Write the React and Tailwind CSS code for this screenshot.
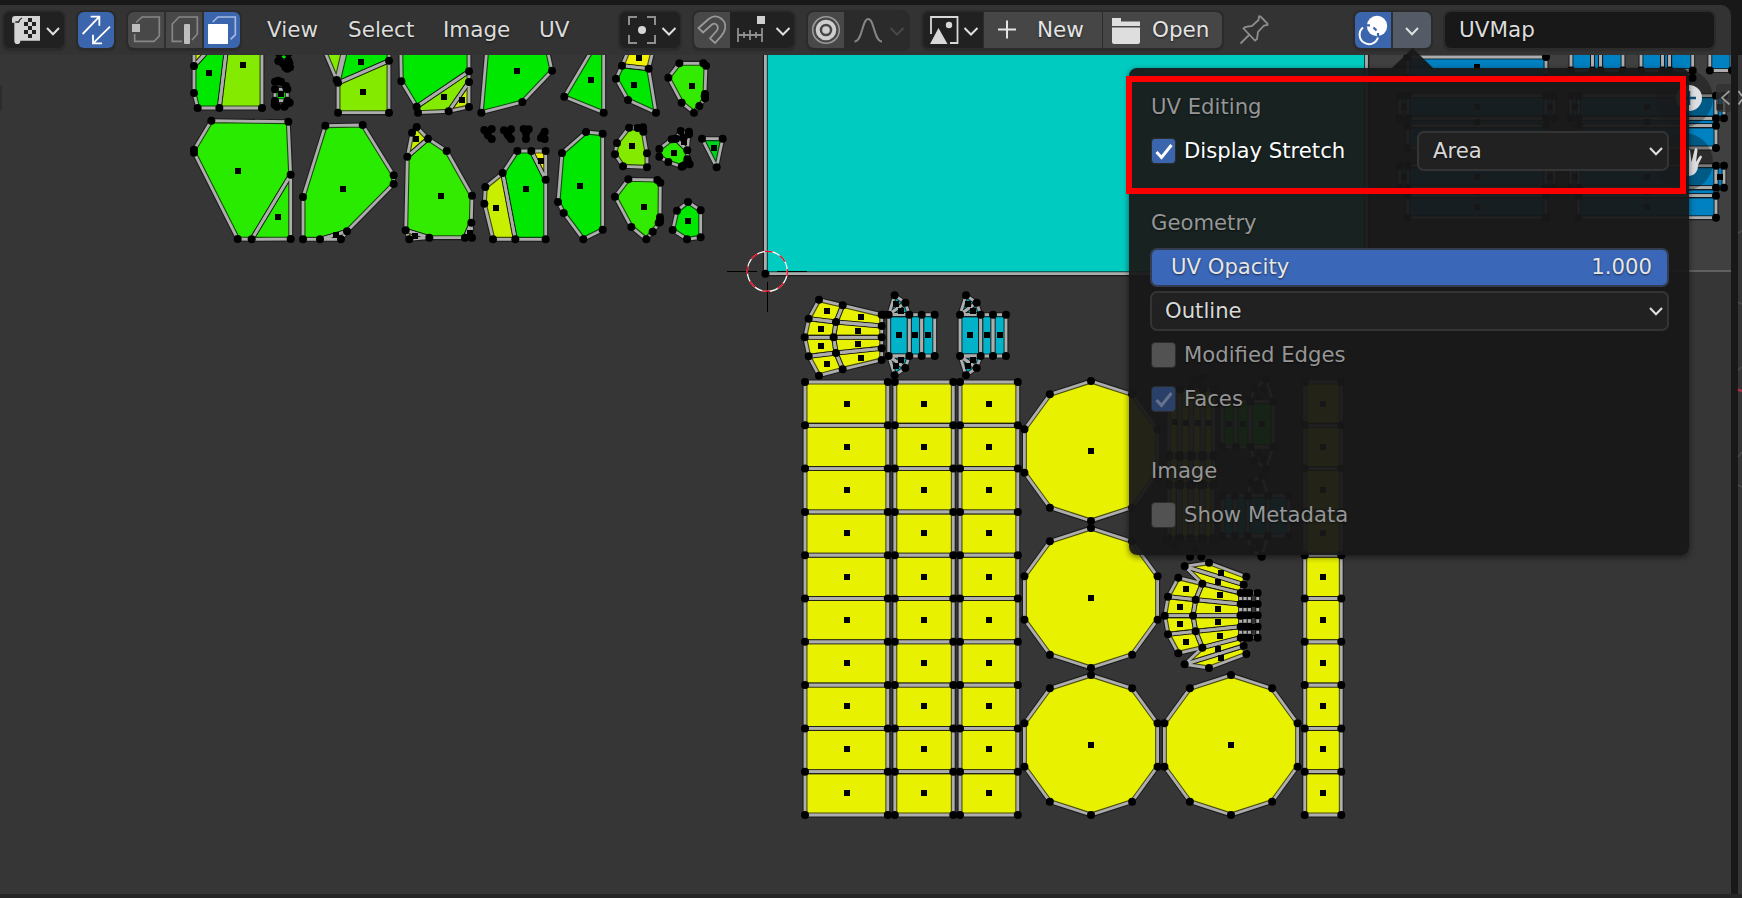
import React from "react";

const GREEN = "#00e800";
const LEAF = "#28eb00";
const LIME = "#84eb00";
const CHART = "#c9ef00";
const YELLOW = "#e8f200";
const TEAL = "#00b3c8";
const BLUE = "#0081c1";
const NONE = "none";

// An island group: faces [color, points], extra vertices and face dots, in local units.
const group = (ox, oy, sx, sy, faces, dots = [], verts = []) => {
  const t = ([x, y]) => [ox + x / sx, oy + y / sy];
  return {
    faces: faces.map(([c, pts]) => [c, pts.map(t)]),
    dots: dots.map(t),
    verts: verts.map(t),
  };
};

const rect = (c, x1, y1, x2, y2) => [c, [[x1, y1], [x2, y1], [x2, y2], [x1, y2]]];

const leftIslands = group(180, 50, 3, 3, [
  [CHART, [[42, 48], [42, 0], [85, 0]]],
  [GREEN, [[42, 48], [42, 129], [53, 174], [118, 174], [140, -10], [95, -10]]],
  [LIME, [[118, 174], [246, 174], [246, -10], [140, -10]]],
  [LIME, [[432, 0], [470, 90], [491, 0]]],
  [GREEN, [[474, 98], [497, 0], [627, -10], [627, 32]]],
  [LIME, [[474, 100], [627, 32], [627, 188], [474, 188]]],
  [GREEN, [[662, -10], [664, 94], [710, 170], [867, 64], [867, -10]]],
  [LIME, [[714, 188], [710, 170], [867, 64], [867, 96], [806, 184]]],
  [CHART, [[806, 184], [867, 96], [867, 171]]],
  [LEAF, [[94, 212], [325, 215], [332, 374], [215, 568], [173, 567], [42, 308], [42, 299]]],
  [LEAF, [[332, 374], [332, 567], [215, 568]]],
  [LEAF, [[436, 227], [548, 225], [641, 376], [641, 402], [501, 544], [420, 568], [369, 568], [369, 441]]],
  [NONE, [[420, 568], [501, 544], [483, 568]]],
  [CHART, [[710, 231], [744, 266], [682, 320], [696, 248]]],
  ["#32eb00", [[682, 320], [744, 266], [800, 303], [876, 437], [874, 518], [855, 563], [748, 563], [677, 541]]],
  [CHART, [[677, 541], [748, 563], [688, 568]]],
  [GREEN, [[874, 518], [876, 563], [855, 563]]],
  [GREEN, [[285, 118], [322, 118], [322, 152], [285, 152]]],
  [GREEN, [[297, 10], [325, 10], [325, 32], [300, 32]]],
], [
  [87, 69], [189, 45], [543, 36], [549, 126], [792, 141], [846, 150], [174, 363], [294, 501],
  [489, 417], [708, 267], [783, 438], [467, 555], [704, 557], [869, 549], [303, 133],
], [
  [285, 95], [294, 92], [303, 95], [319, 113], [318, 108], [285, 158], [329, 158], [291, 170], [313, 170], [284, 164], [319, 163],
  [295, 33], [308, 40], [328, 40], [330, 52], [316, 52], [322, 56],
]);

const midIslands = group(470, 50, 3, 3, [
  [GREEN, [[51, -10], [34, 188], [157, 156], [246, 62], [230, -10]]],
  [GREEN, [[375, -15], [283, 140], [401, 188], [401, -15]]],
  ["#f0f000", [[456, 47], [536, 56], [552, -10], [480, -10]]],
  [GREEN, [[456, 47], [536, 56], [558, 188], [474, 150], [438, 86]]],
  ["#32eb00", [[628, 40], [700, 40], [708, 47], [705, 132], [705, 145], [688, 168], [672, 188], [635, 158], [595, 83]]],
  [CHART, [[98, 369], [46, 411], [43, 461], [69, 568], [136, 568]]],
  [GREEN, [[98, 369], [142, 303], [184, 303], [227, 389], [227, 568], [136, 568]]],
  ["#f0f000", [[184, 303], [227, 303], [227, 389]]],
  [GREEN, [[348, 246], [398, 251], [398, 539], [340, 568], [281, 489], [264, 456], [276, 309]]],
  [LIME, [[477, 233], [503, 234], [519, 232], [520, 245], [531, 310], [531, 352], [459, 349], [435, 313], [441, 279]]],
  [NONE, [[616, 266], [632, 243], [657, 250], [652, 301]]],
  [LEAF, [[568, 297], [605, 268], [618, 266], [652, 301], [652, 328], [635, 350], [595, 336], [568, 320]]],
  ["#00d21c", [[696, 266], [758, 266], [740, 352]]],
  ["#32eb00", [[475, 388], [562, 390], [571, 398], [570, 502], [570, 516], [548, 545], [529, 568], [484, 531], [435, 440]]],
  [GREEN, [[654, 456], [692, 481], [692, 562], [651, 568], [608, 540], [621, 482]]],
], [
  [141, 63], [363, 90], [507, 24], [492, 105], [666, 108], [78, 474], [168, 417], [212, 332],
  [330, 408], [486, 288], [612, 309], [642, 276], [732, 294], [522, 471], [654, 513],
], [
  [43, 240], [65, 237], [54, 256], [65, 267], [50, 246], [102, 241], [123, 238], [112, 252], [123, 267], [116, 258],
  [161, 237], [176, 238], [168, 250], [168, 267], [224, 245], [213, 264], [224, 267], [219, 256],
  [632, 243], [657, 245], [657, 253], [641, 263], [659, 343], [640, 347], [653, 336], [570, 509], [566, 518], [704, 139],
]);

const tri = (x, top) => {
  const y = (v) => (top ? v : 332 - v);
  return [
    [TEAL, [[x, y(104)], [x + 18, y(46)], [x + 50, y(68)]]],
    [TEAL, [[x, y(104)], [x + 50, y(68)], [x + 62, y(104)]]],
  ];
};
const strip = (x) => [
  ...tri(x, true),
  ...tri(x, false),
  rect(TEAL, x, 104, x + 62, 228),
  rect(TEAL, x + 62, 104, x + 99, 228),
  rect(TEAL, x + 99, 104, x + 138, 228),
];

const quads = (color, rows) => {
  const out = [];
  for (let r = 0; r + 1 < rows.length; r++)
    for (let i = 0; i + 1 < rows[r].length; i++)
      out.push([color, [rows[r][i], rows[r][i + 1], rows[r + 1][i + 1], rows[r + 1][i]]]);
  return out;
};

const upperFan = group(790, 280, 3, 3, [
  ...quads(YELLOW, [
    [[87, 59], [56, 116], [44, 172], [56, 229], [87, 287]],
    [[158, 76], [138, 126], [131, 172], [138, 219], [158, 268]],
    [[275, 104], [275, 138], [275, 172], [275, 205], [275, 240]],
  ]),
  ...strip(296),
  ...strip(510),
], [
  [111, 93], [93, 147], [93, 198], [111, 252], [213, 111], [204, 153], [204, 192], [213, 234],
  [327, 165], [375, 165], [414, 165], [540, 165], [591, 165], [630, 165],
  [318, 72], [333, 92], [318, 258], [333, 241], [533, 72], [548, 92], [533, 258], [548, 241],
], [[283, 104]]);

const lowerFan = group(1010, 540, 3, 3, [
  ...quads(YELLOW, [
    [[505, 113], [474, 170], [464, 227], [474, 283], [505, 340]],
    [[577, 131], [557, 179], [549, 227], [557, 274], [577, 323]],
    [[692, 159], [692, 192], [692, 227], [692, 260], [692, 293]],
  ]),
  [YELLOW, [[524, 79], [597, 68], [709, 110], [701, 134]]],
  [YELLOW, [[524, 79], [701, 134], [692, 159], [577, 131]]],
  [YELLOW, [[524, 373], [597, 384], [709, 342], [701, 318]]],
  [YELLOW, [[524, 373], [701, 318], [692, 293], [577, 323]]],
  ...quads(NONE, [159, 192, 226, 260, 293].map((y) => [[692, y], [705, y], [718, y], [743, y]])),
], [
  [528, 147], [510, 201], [510, 252], [528, 306], [630, 165], [624, 207], [624, 246], [630, 288],
  [633, 99], [624, 126], [624, 327], [633, 353],
  ...[192, 226, 260].flatMap((y) => [[699, y], [711, y], [731, y]]),
], [[540, 50], [574, 50], [755, 50]]);

const ROW = 43.3;
const columns = { faces: [], dots: [], verts: [] };
[[805, 887.8, 847], [894.8, 953.3, 924], [960, 1017.8, 989], [1304.7, 1341.3, 1323]].forEach(([a, b, c]) => {
  for (let r = 0; r < 10; r++) {
    columns.faces.push(rect(YELLOW, a, 382 + r * ROW, b, 382 + (r + 1) * ROW));
    columns.dots.push([c, 403.7 + r * 43.2]);
  }
});

const decagon = (cx, cy) => [
  YELLOW,
  Array.from({ length: 10 }, (_, i) => [cx + 70 * Math.sin((i * Math.PI) / 5), cy - 70 * Math.cos((i * Math.PI) / 5)]),
];
const centers = [[1091, 451], [1091, 598], [1091, 745], [1231, 745]];
const decagons = { faces: centers.map(([x, y]) => decagon(x, y)), dots: centers, verts: [] };

const cyan = { faces: [rect("#00cbc1", 765.4, 20, 1366.5, 273.7)], dots: [], verts: [] };

const blueBlock = (a, b) => [
  rect(BLUE, a, 95.7, b, 118.3), rect(BLUE, a - 8, 95.7, a, 118.3), rect(BLUE, b, 95.7, b + 8, 118.3),
  rect(BLUE, a, 118.3, b, 125.7), rect(BLUE, a, 125.7, b, 148),
  rect(BLUE, a, 165.7, b, 187.7), rect(BLUE, a - 8, 165.7, a, 187.7), rect(BLUE, b, 165.7, b + 8, 187.7),
  rect(BLUE, a, 187.7, b, 195.7), rect(BLUE, a, 195.7, b, 217.7),
];
const blueDots = (a, b) => {
  const m = (a + b) / 2;
  return [[m, 107], [m, 122], [m, 137], [m, 177], [m, 192], [m, 207], [a - 4, 107], [b + 4, 107], [a - 4, 177], [b + 4, 177]];
};
const blues = {
  faces: [
    rect(BLUE, 1407.6, 57, 1546, 78), ...blueBlock(1407.6, 1546), ...blueBlock(1578.5, 1716),
    rect(BLUE, 1571, 30, 1592.5, 70.5), rect(BLUE, 1592.5, 30, 1600.6, 70.5), rect(BLUE, 1600.6, 30, 1623, 70.5),
    rect(BLUE, 1641, 30, 1662.6, 70.5), rect(BLUE, 1662.6, 30, 1669.6, 70.5), rect(BLUE, 1669.6, 30, 1692.7, 70.5),
    rect(BLUE, 1709.8, 30, 1732, 70.5),
  ],
  dots: [[1477, 67], ...blueDots(1407.6, 1546), ...blueDots(1578.5, 1716)],
  verts: [[1692.5, 78]],
};

const hidden = group(1120, 300, 2.521, 3, [
  ...[123, 152, 181, 210].flatMap((x) => [rect(YELLOW, x, 268, x + 26, 465), rect(YELLOW, x, 470, x + 26, 552), rect(YELLOW, x, 556, x + 24, 715)]),
  rect(GREEN, 258, 305, 292, 441), rect(GREEN, 292, 305, 328, 441), rect(GREEN, 328, 305, 386, 441),
  [NONE, [[328, 305], [339, 265], [368, 238], [386, 305]]],
  [NONE, [[328, 441], [339, 482], [368, 507], [386, 441]]],
  rect(TEAL, 258, 587, 290, 708), rect(TEAL, 290, 587, 322, 708), rect(TEAL, 322, 587, 373, 708), rect(TEAL, 373, 587, 425, 708),
  [NONE, [[322, 587], [330, 548], [357, 527], [373, 587]]],
  [NONE, [[322, 708], [330, 748], [357, 768], [373, 708]]],
], [
  [138, 366], [167, 369], [197, 369], [224, 369], [274, 372], [310, 372], [358, 372], [364, 270], [350, 290],
  [364, 477], [350, 460], [350, 552], [345, 570], [350, 742], [342, 722], [190, 747],
], [[182, 233], [210, 233], [196, 244], [140, 738], [115, 722], [240, 724]]);

const all = [cyan, blues, leftIslands, midIslands, hidden, upperFan, columns, decagons, lowerFan];

const str = (pts) => pts.map(([x, y]) => `${x.toFixed(1)},${y.toFixed(1)}`).join(" ");

function Island({ island }) {
  const verts = [...island.faces.flatMap(([, p]) => p), ...island.verts];
  const seen = new Set();
  const unique = verts.filter((v) => {
    const k = `${Math.round(v[0])}:${Math.round(v[1])}`;
    if (seen.has(k)) return false;
    seen.add(k);
    return true;
  });
  return (
    <g>
      {island.faces.map(([c, p], i) => <polygon key={i} points={str(p)} fill={c} />)}
      <g fill="none" strokeLinejoin="round">
        {island.faces.map(([, p], i) => <polygon key={i} points={str(p)} stroke="#141414" strokeOpacity="0.75" strokeWidth="5" />)}
        {island.faces.map(([, p], i) => <polygon key={i} points={str(p)} stroke="#adadad" strokeWidth="2.8" />)}
      </g>
      {unique.map(([x, y], i) => <circle key={i} cx={x} cy={y} r="4" />)}
      {island.dots.map(([x, y], i) => <rect key={i} x={Math.round(x) - 3} y={Math.round(y) - 3} width="6" height="6" />)}
    </g>
  );
}

function UVCanvas() {
  return (
    <svg className="block shrink-0" width="1742" height="843" viewBox="0 55 1742 843">
      <rect x="0" y="55" width="1742" height="843" fill="#363636" />
      <rect x="1366" y="55" width="365" height="216" fill="#404040" />
      <path d="M1369.5 55V270" stroke="#333" />
      <path d="M1366 271H1731" stroke="#6f6f6f" strokeWidth="1.3" />
      {all.map((is, i) => <Island key={i} island={is} />)}
      <path d="M727 271.5H757M777 271.5H807M767.5 282V312" stroke="#000" strokeWidth="1" />
      <circle cx="767.3" cy="271.3" r="20" fill="none" stroke="#fff" strokeWidth="1.3" />
      <circle cx="767.3" cy="271.3" r="20" fill="none" stroke="#f00018" strokeWidth="1.3" strokeDasharray="7.85 7.85" strokeDashoffset="3" />
      <circle cx="1684" cy="98" r="29" fill="#000" fillOpacity="0.3" />
      <circle cx="1684" cy="162" r="29" fill="#000" fillOpacity="0.3" />
      <circle cx="1689" cy="98" r="13" fill="#dedfe2" />
      <path d="M1682 98H1696M1689 91V105" stroke="#0c5078" strokeWidth="2.5" />
      <path d="M1682 176Q1698 178 1698 165L1702 157Q1701 154 1699 157L1696 162L1697.5 150Q1696 146 1694.5 150L1691.5 162L1690 150H1682Z" fill="#dedfe2" />
      <rect x="1716" y="84" width="16" height="28" rx="4" fill="#303030" fillOpacity="0.75" />
      <path d="M1729.5 91L1722 97.7L1729.5 104.5" fill="none" stroke="#999" strokeWidth="1.7" />
      <rect x="-4" y="85" width="6" height="26" rx="3" fill="#2c2c2c" />
      <rect x="1731" y="55" width="7" height="843" fill="#181818" />
      <rect x="1738" y="55" width="4" height="843" fill="#353535" />
      <path d="M1738.5 91L1742 96M1738.5 104.5L1742 99.5" stroke="#aaa" strokeWidth="1.6" />
      <path d="M1738 389.5L1742 391" stroke="#b03048" strokeWidth="2.5" />
      <path d="M1738 233L1742 231M1738 302L1742 304M1738 370L1742 367M1738 457L1742 452M1738 485L1742 487" stroke="#4a4a4a" strokeWidth="1.5" />
      <rect x="0" y="894" width="1742" height="4" fill="#252525" />
    </svg>
  );
}

const Chevron = ({ className = "text-[#e0e0e0]" }) => (
  <svg className={className} width="14" height="9" viewBox="0 0 14 9" fill="none" stroke="currentColor" strokeWidth="2">
    <path d="M1 1L7 7.3L13 1" />
  </svg>
);

const Cell = ({ x, w = 36, children }) => (
  <svg className="block shrink-0" width={w} height="36" viewBox={`${x} 12 ${w} 36`} fill="none">
    {children}
  </svg>
);

const BigCell = ({ x, children }) => (
  <svg className="block shrink-0" width="36" height="36" viewBox={`${x} 36 108 108`} fill="none">
    {children}
  </svg>
);

const box = "flex h-[36px] shrink-0 items-center overflow-hidden rounded-[6px] shadow-[0_0_0_2px_#2b2b2b,0_2px_2px_1px_#2a2a2a]";
const menu = "shrink-0 whitespace-nowrap";

function Header() {
  return (
    <header className="flex h-[50px] w-[1731px] shrink-0 items-start rounded-tr-[10px] bg-[#333333] pt-[7px] pl-[4px] text-[21.5px] leading-[36px] text-[#dcdcdc] [text-shadow:0_1px_2px_rgba(0,0,0,0.6)]">
      <div className={`${box} w-[60px] bg-[#212121]`}>
        <svg className="ml-[8px] block" width="28" height="28" viewBox="36 48 84 84">
          <path d="M46 48H120V122H61V122Q61 132 52 132Q43 132 43 122V68H36V58Q36 48 46 48Z" fill="#d4d4d4" />
          <path d="M46 66H56Q58 57 66 54" fill="none" stroke="#212121" strokeWidth="4" />
          <path d="M84 54h12v12h-12zM72 66h12v12h-12zM96 66h12v12h-12zM84 78h12v12h-12zM72 90h12v12h-12zM96 90h12v12h-12zM84 102h12v12h-12z" fill="#212121" />
        </svg>
        <div className="ml-[6px] mt-[3px]"><Chevron /></div>
      </div>
      <div className={`${box} ml-[14px] w-[36px] bg-[#3b65ad]`}>
        <BigCell x={234}>
          <path d="M248 102L298 50M272 50H298V77M330 80L279 130M279 104V130H306" stroke="#fff" strokeWidth="5.5" />
        </BigCell>
      </div>
      <div className={`${box} ml-[14px] w-[112px] gap-[2px] bg-[#303030]`}>
        <div className="bg-[#484848]">
          <BigCell x={384}>
            <path d="M410 68V66L426 51H478V108L462 124H404V102" stroke="#868686" strokeWidth="5" />
            <rect x="396" y="72" width="24" height="24" fill="#bebebe" />
          </BigCell>
        </div>
        <div className="bg-[#484848]">
          <BigCell x={498}>
            <path d="M546 124H517V72L537 51H592V102L576 120" stroke="#868686" strokeWidth="5" />
            <rect x="552" y="72" width="18" height="60" rx="3" fill="#bebebe" />
          </BigCell>
        </div>
        <div className="bg-[#3b65ad]">
          <BigCell x={612}>
            <path d="M638 66L654 51H706V104L692 118" stroke="#a6b9de" strokeWidth="5" />
            <rect x="624" y="72" width="60" height="60" rx="2" fill="#fff" />
          </BigCell>
        </div>
      </div>
      <nav className="ml-[27px] flex w-[353px] shrink-0">
        <span className={`${menu} w-[81px]`}>View</span>
        <span className={`${menu} w-[95px]`}>Select</span>
        <span className={`${menu} w-[96px]`}>Image</span>
        <span className={menu}>UV</span>
      </nav>
      <div className={`${box} w-[60px] bg-[#212121]`}>
        <Cell x={620} w={60}>
          <path d="M629 25V17H637M647 17H655V25M655 35V43H647M637 43H629V35" stroke="#8f8f8f" strokeWidth="2" />
          <circle cx="642" cy="30" r="4" fill="#d6d6d6" />
          <path d="M662.5 28L669 34.5L675.5 28" stroke="#e0e0e0" strokeWidth="2" />
        </Cell>
      </div>
      <div className={`${box} ml-[14px] w-[100px] bg-[#212121]`}>
        <div className="bg-[#484848]">
          <Cell x={694}>
            <path d="M698.5 28L709 18.8C716 13 727 19 725 29C724.5 31.5 723 34 721 36.3L715 43L710 38.5L716.5 31C720 26.5 715.5 22 712 24.5L703 32.5Z" stroke="#999" strokeWidth="1.8" />
          </Cell>
        </div>
        <Cell x={730} w={64}>
          <path d="M738 28V42M762 28V42M738 35H762M744 32V38M750 30V40M756 32V38" stroke="#909090" strokeWidth="1.8" />
          <rect x="757" y="16" width="8" height="8" fill="#cfcfcf" />
          <path d="M776.5 28L783 34.5L789.5 28" stroke="#e0e0e0" strokeWidth="2" />
        </Cell>
      </div>
      <div className={`${box} ml-[14px] w-[100px] bg-[#2b2b2b]`}>
        <div className="bg-[#484848]">
          <Cell x={808}>
            <circle cx="826" cy="30" r="13.3" stroke="#9a9a9a" strokeWidth="1.6" />
            <circle cx="826" cy="30" r="8.3" stroke="#cfcfcf" strokeWidth="4" />
            <circle cx="826" cy="30" r="3.8" fill="#cfcfcf" />
          </Cell>
        </div>
        <Cell x={844} w={64}>
          <path d="M854.5 41.5C862.5 41.5 862 19 868.2 19C874.4 19 874 41.5 882 41.5" stroke="#858585" strokeWidth="2" />
          <path d="M890.5 28L897 34.5L903.5 28" stroke="#484848" strokeWidth="2" />
        </Cell>
      </div>
      <div className={`${box} ml-[15px] w-[299px] gap-[1px] bg-[#2b2b2b]`}>
        <div className="w-[60px] shrink-0 bg-[#212121]">
          <Cell x={923} w={60}>
            <path d="M931 34V17H957.5V43H950" stroke="#d8d8d8" strokeWidth="1.8" />
            <path d="M930 44L938.5 28L947.5 44Z" fill="#d8d8d8" />
            <circle cx="949" cy="25" r="3.2" fill="#d8d8d8" />
            <path d="M964.5 28L971 34.5L977.5 28" stroke="#e0e0e0" strokeWidth="2" />
          </Cell>
        </div>
        <div className="flex w-[118px] shrink-0 items-center bg-[#464646]">
          <Cell x={984} w={54}>
            <path d="M998 29.5H1016M1007 20.5V38.5" stroke="#e4e4e4" strokeWidth="2" />
          </Cell>
          <span className="-ml-[1px] text-[#e4e4e4]">New</span>
        </div>
        <div className="flex w-[119px] shrink-0 items-center bg-[#464646]">
          <Cell x={1103} w={49}>
            <path d="M1112 26V18H1121V21.5H1140V26ZM1112 27.5H1140V42Q1140 44 1138 44H1114Q1112 44 1112 42Z" fill="#dedede" />
          </Cell>
          <span className="text-[#e4e4e4]">Open</span>
        </div>
      </div>
      <div className="ml-[15px]">
        <Cell x={1237}>
          <path d="M1240.5 43.5L1250 34M1243.5 28.5L1255 40.5L1257 39L1258 32L1264 25.5L1267.5 25V23.5L1260.5 16.5H1259L1258.5 20L1252 26L1245 27.2Z" stroke="#8d8d8d" strokeWidth="1.8" />
        </Cell>
      </div>
      <div className={`${box} ml-[82px] w-[76px] gap-[2px] bg-[#303030]`}>
        <div className="bg-[#3b65ad]">
          <Cell x={1355}>
            <circle cx="1377" cy="26" r="10.2" fill="#fff" />
            <path d="M1363 27.5A9.4 9.4 0 1 0 1378 37.5" stroke="#fff" strokeWidth="2" />
            <path d="M1366.5 25.3H1370M1373.5 27.5L1376.5 30.5M1378 33V36" stroke="#3b65ad" strokeWidth="2.2" />
          </Cell>
        </div>
        <div className="flex h-[36px] w-[38px] items-center justify-center bg-[#545b66] pt-[3px]">
          <Chevron />
        </div>
      </div>
      <div className={`${box} ml-[14px] w-[269px] bg-[#181818] pl-[14px]`}>
        <span>UVMap</span>
      </div>
    </header>
  );
}

function Check({ on, dim }) {
  const tone = on ? (dim ? "bg-[#2b4068]" : "bg-[#3b65ad]") : "bg-[#525252]";
  return (
    <span className={`flex h-[26px] w-[25px] shrink-0 items-center justify-center rounded-[4px] border border-[#2c2c2c] ${tone}`}>
      {on && (
        <svg width="18" height="17" viewBox="0 0 18 17" fill="none" stroke={dim ? "#65728b" : "#fff"} strokeWidth="3">
          <path d="M1.5 9L6.5 14.5L16.5 2" />
        </svg>
      )}
    </span>
  );
}

const row = "flex h-[44px] items-center";

function CheckRow({ on, dim, label }) {
  return (
    <div className={row}>
      <Check on={on} dim={dim} />
      <span className="ml-[8px] text-[#969696]">{label}</span>
    </div>
  );
}

const select = "flex h-[40px] items-center justify-between rounded-[7px] border-2 border-[#343434] bg-[#212121] pr-[4px]";

function Popover() {
  return (
    <>
      <svg className="absolute top-[48px] left-[1392px]" width="42" height="20" viewBox="0 0 42 20">
        <path d="M0 20L20.5 0L41 20Z" fill="#181818" fillOpacity="0.95" />
      </svg>
      <section className="absolute top-[68px] left-[1129px] h-[487px] w-[560px] rounded-[8px] bg-[#181818]/95 pt-[17px] pr-[20px] pl-[22px] text-[21.2px] leading-[40px] text-[#969696] shadow-[0_2px_6px_rgba(0,0,0,0.55)] [text-shadow:0_1px_2px_rgba(0,0,0,0.6)]">
        <div className={row}><span>UV Editing</span></div>
        <div className={row}>
          <Check on />
          <span className="ml-[8px] text-white">Display Stretch</span>
          <div className={`${select} ml-auto w-[252px] pl-[14px]`}>
            <span className="text-[#d8d8d8]">Area</span>
            <Chevron />
          </div>
        </div>
        <div className={`${row} mt-[28px]`}><span>Geometry</span></div>
        <div className={row}>
          <div className="-ml-px flex h-[39px] w-[519px] items-center justify-between rounded-[7px] border-2 border-[#333c50] bg-[#3b67b8] pr-[15px] pl-[19px] text-[#e6e6e6]">
            <span>UV Opacity</span>
            <span>1.000</span>
          </div>
        </div>
        <div className={row}>
          <div className={`${select} -ml-px w-[519px] pl-[13px]`}>
            <span className="text-[#d8d8d8]">Outline</span>
            <Chevron />
          </div>
        </div>
        <CheckRow label="Modified Edges" />
        <CheckRow on dim label="Faces" />
        <div className={`${row} mt-[28px]`}><span>Image</span></div>
        <CheckRow label="Show Metadata" />
      </section>
      <div className="absolute top-[76px] left-[1126px] h-[118px] w-[560px] border-[6px] border-[#fc0000]" />
    </>
  );
}

export default function App() {
  return (
    <div className="relative flex h-[898px] w-[1742px] flex-col overflow-hidden bg-[#181818] pt-[5px] font-['DejaVu_Sans',sans-serif]">
      <Header />
      <UVCanvas />
      <Popover />
    </div>
  );
}
